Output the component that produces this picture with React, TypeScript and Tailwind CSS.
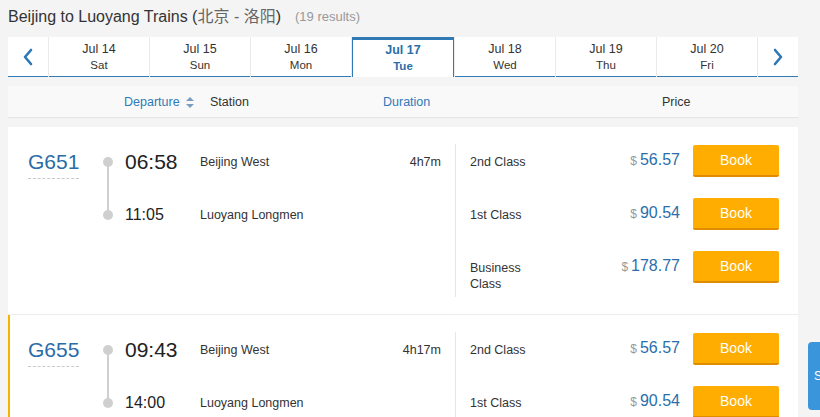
import React from 'react'

const dates = [
  { d: 'Jul 14', w: 'Sat' },
  { d: 'Jul 15', w: 'Sun' },
  { d: 'Jul 16', w: 'Mon' },
  { d: 'Jul 17', w: 'Tue', active: true },
  { d: 'Jul 18', w: 'Wed' },
  { d: 'Jul 19', w: 'Thu' },
  { d: 'Jul 20', w: 'Fri' },
]

type Seat = { name: string; price: string }

const trains: {
  no: string
  dep: string
  arr: string
  from: string
  to: string
  dur: string
  seats: Seat[]
  highlight?: boolean
}[] = [
  {
    no: 'G651',
    dep: '06:58',
    arr: '11:05',
    from: 'Beijing West',
    to: 'Luoyang Longmen',
    dur: '4h7m',
    seats: [
      { name: '2nd Class', price: '56.57' },
      { name: '1st Class', price: '90.54' },
      { name: 'Business Class', price: '178.77' },
    ],
  },
  {
    no: 'G655',
    dep: '09:43',
    arr: '14:00',
    from: 'Beijing West',
    to: 'Luoyang Longmen',
    dur: '4h17m',
    highlight: true,
    seats: [
      { name: '2nd Class', price: '56.57' },
      { name: '1st Class', price: '90.54' },
      { name: 'Business Class', price: '178.77' },
    ],
  },
]

function Chevron({ dir }: { dir: 'left' | 'right' }) {
  return (
    <svg width="12" height="18" viewBox="0 0 12 18" fill="none">
      <polyline
        points={dir === 'left' ? '9,2 3,9 9,16' : '3,2 9,9 3,16'}
        stroke="#2b78b6"
        strokeWidth="2.6"
        strokeLinecap="round"
        strokeLinejoin="round"
      />
    </svg>
  )
}

function SortIcon() {
  return (
    <svg width="8" height="11" viewBox="0 0 8 11" className="ml-[6px]">
      <polygon points="4,0 8,4 0,4" fill="#7d9dbd" />
      <polygon points="0,7 8,7 4,11" fill="#7d9dbd" />
    </svg>
  )
}

function TrainCard({ t }: { t: (typeof trains)[number] }) {
  return (
    <div
      className={`flex bg-white ${t.highlight ? 'border-l-2 border-[#f5b400]' : ''} border-b border-[#ececec]`}
    >
      {/* left: number, times, stations, duration */}
      <div
        className={`flex pt-[18px] pr-[14px] ${t.highlight ? 'w-[445px] pl-[18px]' : 'w-[447px] pl-[20px]'}`}
      >
        <div className="w-[75px]">
          <div className="inline-flex h-[34px] items-center border-b border-dashed border-[#c8c8c8] text-[21px] text-[#2a6ca8] leading-none">
            {t.no}
          </div>
        </div>
        <div className="relative flex flex-1 flex-col gap-[19px]">
          <div className="absolute left-[4px] top-[18px] h-[53px] w-[2px] bg-[#cfcfcf]" />
          <div className="flex h-[34px] items-center">
            <div className="h-[10px] w-[10px] rounded-full bg-[#cfcfcf]" />
            <div className="ml-[12px] w-[75px] text-[21px] text-[#222]">{t.dep}</div>
            <div className="flex-1 text-[12.5px] text-[#333]">{t.from}</div>
            <div className="text-[12.5px] text-[#333]">{t.dur}</div>
          </div>
          <div className="flex h-[34px] items-center">
            <div className="h-[10px] w-[10px] rounded-full bg-[#cfcfcf]" />
            <div className="ml-[12px] w-[75px] text-[16px] text-[#222]">{t.arr}</div>
            <div className="flex-1 text-[12.5px] text-[#333]">{t.to}</div>
          </div>
        </div>
      </div>
      {/* right: seat classes */}
      <div className="flex-1 pt-[17px] pb-[17px] pr-[19px]">
        <div className="flex flex-col border-l border-[#e6e6e6] pl-[14px] pt-[1px] pb-[5px]">
          {t.seats.map((s, i) => (
            <div key={s.name} className={`flex items-start ${i < t.seats.length - 1 ? 'h-[53px]' : ''}`}>
              <div className="mt-[9px] w-[70px] text-[12.5px] leading-4 text-[#333]">{s.name}</div>
              <div className="mt-[5px] flex flex-1 items-baseline justify-end">
                <span className="mr-[3px] text-[12px] text-[#999]">$</span>
                <span className="text-[16px] leading-5 text-[#2b6eab]">{s.price}</span>
              </div>
              <button className="ml-[13px] h-[32px] w-[86px] rounded-[2px] border-b-2 border-[#e08c00] bg-[#ffad00] text-[14px] text-white">
                Book
              </button>
            </div>
          ))}
        </div>
      </div>
    </div>
  )
}

export default function App() {
  return (
    <div
      className="relative h-screen overflow-hidden bg-[#f4f4f4] text-[#333]"
      style={{ fontFamily: '"Liberation Sans", Arial, "Noto Sans CJK SC", sans-serif' }}
    >
      <div className="ml-[8px] w-[790px]">
        {/* title */}
        <div className="flex h-[37px] items-center pb-[3px]">
          <span className="text-[16px] text-[#333]">
            Beijing to Luoyang Trains (<span className="text-[#666]">北京 - 洛阳</span>)
          </span>
          <span className="ml-[14px] text-[13px] text-[#999]">(19 results)</span>
        </div>

        {/* date tabs */}
        <div className="flex h-[40px] gap-px bg-[#ebebeb]">
          <div className="flex w-[40px] items-center justify-center border-b border-[#2f7ab5] bg-white">
            <Chevron dir="left" />
          </div>
          {dates.map((d) =>
            d.active ? (
              <div
                key={d.d}
                className="flex flex-1 flex-col items-center justify-center border-x border-t-[3px] border-[#2f7ab5] bg-white pb-[1px] font-bold text-[#2a6ea8]"
              >
                <div className="text-[12.5px] leading-4">{d.d}</div>
                <div className="text-[11.5px] leading-4">{d.w}</div>
              </div>
            ) : (
              <div
                key={d.d}
                className="flex flex-1 flex-col items-center justify-center border-b border-[#2f7ab5] bg-white text-[#333]"
              >
                <div className="text-[12.5px] leading-4">{d.d}</div>
                <div className="text-[11.5px] leading-4">{d.w}</div>
              </div>
            )
          )}
          <div className="flex w-[40px] items-center justify-center border-b border-[#2f7ab5] bg-white">
            <Chevron dir="right" />
          </div>
        </div>

        {/* header */}
        <div className="mt-[9px] flex h-[32px] items-center border-b border-[#e4e4e4] bg-[#f9f9f9] pt-[1px] text-[12.5px]">
          <div className="flex w-[202px] items-center pl-[116px] text-[#2f7ab8]">
            Departure
            <SortIcon />
          </div>
          <div className="w-[173px] text-[#333]">Station</div>
          <div className="w-[279px] text-[#2f7ab8]">Duration</div>
          <div className="text-[#333]">Price</div>
        </div>

        {/* trains */}
        <div className="mt-[9px]">
          {trains.map((t) => (
            <TrainCard key={t.no} t={t} />
          ))}
        </div>
      </div>

      {/* side tab */}
      <div className="absolute left-[808px] top-[342px] flex h-[68px] w-[40px] items-center rounded-l-[4px] bg-[#3a95db] pl-[6px] text-[12px] text-white">
        S
      </div>
    </div>
  )
}
